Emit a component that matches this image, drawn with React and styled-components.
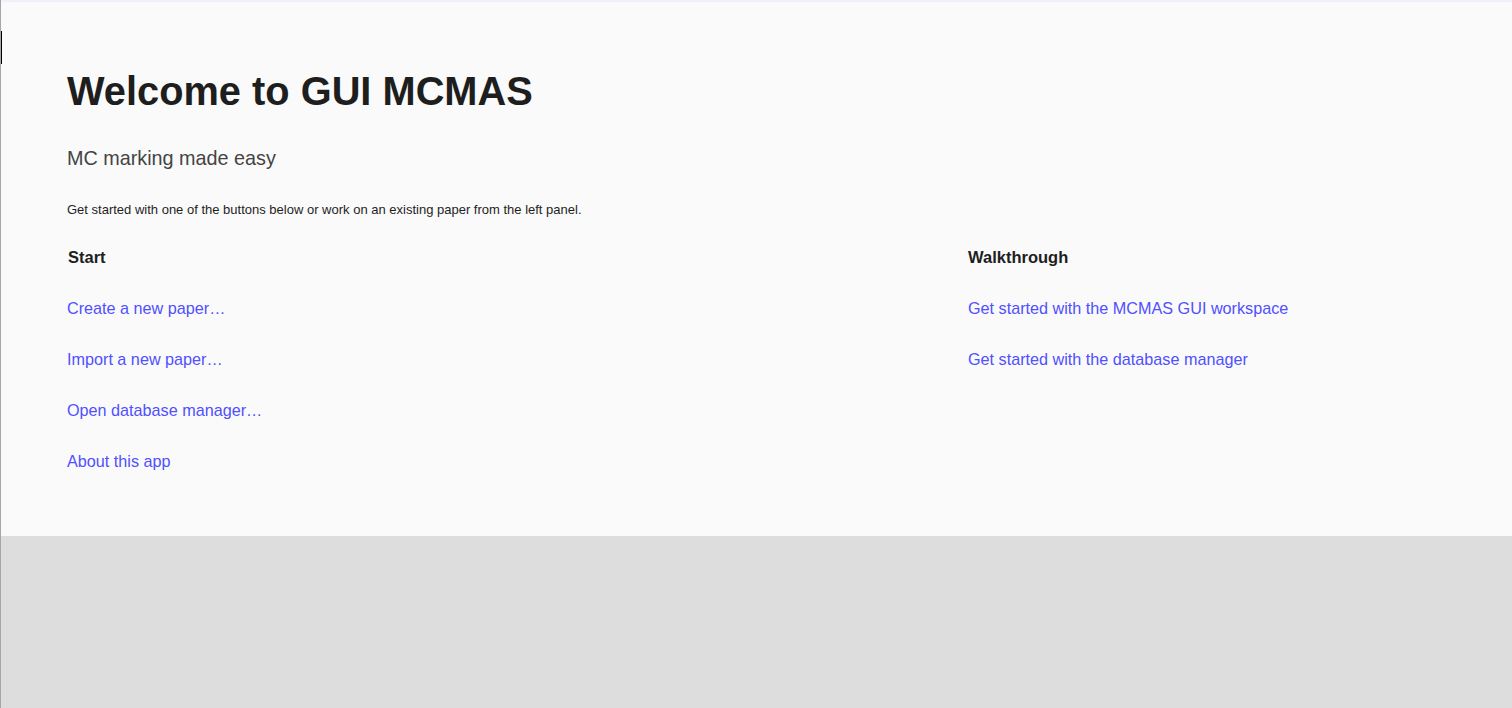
import React from 'react'
import styled, { createGlobalStyle } from 'styled-components'

const GlobalStyle = createGlobalStyle`
  html, body {
    margin: 0;
    padding: 0;
    height: 100%;
    background: #dddddd;
    font-family: "Liberation Sans", Arial, sans-serif;
  }
  #root {
    height: 100%;
  }
`

const Shell = styled.div`
  position: relative;
  height: 708px;
  border-left: 1px solid #a6a6a6;
  background: #dddddd;
  box-sizing: border-box;
`

const Caret = styled.div`
  position: absolute;
  left: 0;
  top: 31px;
  width: 1px;
  height: 33px;
  background: #000;
`

const Panel = styled.main`
  background: #fafafa;
  border-top: 2px solid #eef2f8;
  height: 536px;
  box-sizing: border-box;
  padding: 66px 66px 0 66px;
`

const Title = styled.h1`
  margin: 0;
  font-size: 39.8px;
  font-weight: bold;
  color: #1e1e1e;
  line-height: 46px;
`

const Subtitle = styled.p`
  margin: 32px 0 0;
  font-size: 19.8px;
  color: #444;
  line-height: 24px;
`

const Hint = styled.p`
  margin: 32px 0 0;
  font-size: 13px;
  color: #1e1e1e;
  line-height: 15px;
`

const Columns = styled.div`
  display: grid;
  grid-template-columns: 901px 1fr;
  margin-top: 31px;
`

const Column = styled.section`
  display: flex;
  flex-direction: column;
  gap: 32px;
`

const Heading = styled.h2`
  margin: 0 0 0 ${(p) => (p.$nudge ? '1px' : '0')};
  font-size: 16.5px;
  font-weight: bold;
  color: #1e1e1e;
  line-height: 19px;
`

const Link = styled.a`
  font-size: 16.2px;
  color: #5050ff;
  text-decoration: none;
  line-height: 19px;
  cursor: pointer;
`

const start = [
  'Create a new paper…',
  'Import a new paper…',
  'Open database manager…',
  'About this app',
]

const walkthrough = [
  'Get started with the MCMAS GUI workspace',
  'Get started with the database manager',
]

export default function App() {
  return (
    <>
      <GlobalStyle />
      <Shell>
        <Caret />
        <Panel>
          <Title>Welcome to GUI MCMAS</Title>
          <Subtitle>MC marking made easy</Subtitle>
          <Hint>Get started with one of the buttons below or work on an existing paper from the left panel.</Hint>
          <Columns>
            <Column>
              <Heading $nudge>Start</Heading>
              {start.map((t) => (
                <Link key={t}>{t}</Link>
              ))}
            </Column>
            <Column>
              <Heading>Walkthrough</Heading>
              {walkthrough.map((t) => (
                <Link key={t}>{t}</Link>
              ))}
            </Column>
          </Columns>
        </Panel>
      </Shell>
    </>
  )
}
